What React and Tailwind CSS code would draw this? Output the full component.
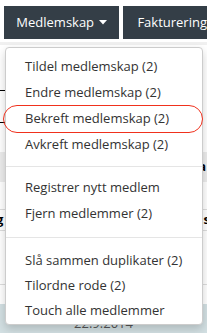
import React from 'react';

const groups = [
    ['Tildel medlemskap (2)', 'Endre medlemskap (2)', 'Bekreft medlemskap (2)', 'Avkreft medlemskap (2)'],
    ['Registrer nytt medlem', 'Fjern medlemmer (2)'],
    ['Slå sammen duplikater (2)', 'Tilordne rode (2)', 'Touch alle medlemmer'],
];

// spacing per group, tuned to the reference
const groupClasses = [
    'pt-[6px]',
    'border-t border-[#e5e5e5] mt-[8px] pt-[8px]',
    'border-t border-[#e5e5e5] mt-[10px] pt-[10px]',
];

const App = () => {
    return (
        <div className="relative w-[207px] h-[333px] overflow-hidden bg-white font-['Open_Sans',sans-serif] text-[#333]">
            {/* top nav */}
            <div className="flex gap-[4px] pt-[6px] pl-[4px]">
                <div className="w-[116px] h-[33px] bg-[#343e47] text-white text-[13px] flex items-center justify-center gap-[5px]">
                    <span>Medlemskap</span>
                    <svg width="8" height="5" viewBox="0 0 8 5"><path d="M0 0h8L4 4.5z" fill="white" /></svg>
                </div>
                <div className="flex-1 h-[33px] bg-[#343e47] text-white text-[13px] flex items-center pl-[14px] whitespace-nowrap">
                    Fakturering
                </div>
            </div>

            {/* page content behind the menu */}
            <div className="mt-[3px] h-[3px] bg-[#f0f0f0]" />
            <div className="h-[45px]" />
            <div className="h-px w-[6px] bg-black" />
            <div className="h-[31px]" />
            <div className="h-px w-[6px] bg-black" />
            <div className="h-[29px]" />
            <div className="h-[30px] bg-[#ececec] flex justify-end items-center text-[13px] font-bold text-black pr-[1px]">a</div>
            <div className="h-[28px] border-b border-[#ddd]" />
            <div className="h-[20px] flex justify-between items-center text-[13px] font-bold text-black">
                <span className="-ml-[4px]">g</span>
                <span className="-mr-[3px]">s</span>
            </div>
            <div className="h-[54px] border-t border-[#ddd]" />
            <div className="h-[20px] border-t border-[#ddd]" />
            <div className="h-[40px] bg-[#d3e0e3] flex justify-center pt-[11px] text-[13px] leading-[16px] text-[#555]">22.9.2014</div>

            {/* dropdown menu */}
            <div className="absolute left-[5px] top-[47px] w-[198px] bg-white border border-[#ccc] rounded-[4px] shadow-[0_4px_10px_rgba(0,0,0,0.18)] pb-[1px]">
                {groups.map((group, gi) => (
                    <div key={gi} className={groupClasses[gi]}>
                        {group.map((label) => (
                            <div
                                key={label}
                                className={[
                                    gi === 2 ? 'h-[25px]' : 'h-[26px]',
                                    'flex items-center pl-[19px] text-[13px] whitespace-nowrap',
                                    label.startsWith('Bekreft') ? 'relative' : '',
                                ].join(' ')}
                            >
                                {label}
                                {label.startsWith('Bekreft') && (
                                    <span className="absolute left-[-3px] right-[-1px] top-[-1px] bottom-[-1px] rounded-full border-[1.5px] border-[#f0311d]" />
                                )}
                            </div>
                        ))}
                    </div>
                ))}
            </div>
        </div>
    );
};

export default App;
